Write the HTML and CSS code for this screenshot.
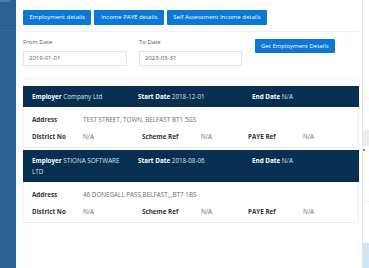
FILE: index.html
```html
<!DOCTYPE html>
<html>
<head>
<meta charset="utf-8">
<link rel="stylesheet" href="styles.css">
</head>
<body>
<div class="app">
  <aside class="sidebar"><div class="side-tab"></div><div class="side-line"></div></aside>
  <main class="main">
    <div class="tabs">
      <button class="btn">Employment details</button>
      <button class="btn">Income PAYE details</button>
      <button class="btn">Self Assessment Income details</button>
    </div>
    <hr class="divider">
    <div class="form-row">
      <div class="field from">
        <label class="field-label">From Date</label>
        <div class="input">2019-01-01</div>
      </div>
      <div class="field to">
        <label class="field-label">To Date</label>
        <div class="input">2023-03-31</div>
      </div>
      <div class="field action">
        <button class="btn btn-get">Get Employment Details</button>
      </div>
    </div>
    <hr class="divider divider-2">
    <section class="card">
      <div class="card-head">
        <div><b>Employer</b> Company Ltd</div>
        <div><b>Start Date</b> 2018-12-01</div>
        <div><b>End Date</b> N/A</div>
      </div>
      <div class="card-body">
        <div class="lbl">Address</div><div class="val wide">TEST STREET, TOWN, BELFAST BT1 5GS</div>
        <div class="lbl">District No</div><div class="val">N/A</div>
        <div class="lbl">Scheme Ref</div><div class="val">N/A</div>
        <div class="lbl">PAYE Ref</div><div class="val">N/A</div>
      </div>
    </section>
    <section class="card">
      <div class="card-head">
        <div><b>Employer</b> STIONA SOFTWARE LTD</div>
        <div><b>Start Date</b> 2018-08-06</div>
        <div><b>End Date</b> N/A</div>
      </div>
      <div class="card-body">
        <div class="lbl">Address</div><div class="val wide">46 DONEGALL PASS,BELFAST,,,BT7 1BS</div>
        <div class="lbl">District No</div><div class="val">N/A</div>
        <div class="lbl">Scheme Ref</div><div class="val">N/A</div>
        <div class="lbl">PAYE Ref</div><div class="val">N/A</div>
      </div>
    </section>
  </main>
  <aside class="panel">
    <div class="p-line l1"></div>
    <div class="p-box"></div>
    <div class="p-dot"></div>
    <div class="p-line l2"></div>
    <div class="p-blue"></div>
  </aside>
</div>
</body>
</html>
```

FILE: styles.css
```css
html, body {
  margin: 0;
  padding: 0;
  background: #fff;
}
body {
  width: 369px;
  height: 268px;
  overflow: hidden;
  font-family: "Open Sans", "Noto Sans", sans-serif;
  font-size: 6px;
  color: #555;
}
.app {
  display: flex;
  height: 268px;
}
.sidebar {
  width: 16px;
  flex: none;
  background: #2b6294;
  display: flex;
  flex-direction: column;
}
.side-tab {
  width: 10px;
  height: 2px;
  background: #4a7ba8;
}
.side-line {
  margin-top: 28px;
  height: 1px;
  background: #336a9b;
}
.main {
  width: 336px;
  flex: none;
  padding: 10px 3px 0 7px;
}
.tabs {
  display: flex;
  gap: 3px;
}
.btn {
  font-family: inherit;
  font-size: 6px;
  line-height: 9px;
  color: #fff;
  background: #0b78d5;
  border: 0;
  border-radius: 1px;
  padding: 3px 6.5px;
  margin: 0;
  white-space: nowrap;
}
.divider {
  border: 0;
  border-top: 1px solid #eef0f2;
  margin: 6px 0 0 0;
}
.form-row {
  display: flex;
  margin-top: 6px;
}
.field {
  display: flex;
  flex-direction: column;
}
.from { width: 104px; margin-right: 12px; }
.to { width: 103px; margin-right: 13px; }
.action { padding-top: 1px; }
.field-label {
  line-height: 9px;
  color: #5a5a5a;
  margin-bottom: 4px;
}
.input {
  height: 13px;
  line-height: 13px;
  border: 1px solid #e3e3e3;
  padding: 0 5px;
  color: #555;
}
.btn-get {
  padding: 2.5px 6px;
}
.divider-2 {
  margin-top: 12px;
}
.card {
  margin-top: 7px;
  font-size: 6.3px;
}
.card + .card {
  margin-top: 2px;
}
.card-head {
  background: #062f52;
  color: #d9e2ea;
  display: grid;
  grid-template-columns: 92px 100px 1fr;
  column-gap: 14px;
  padding: 5px 9px;
  line-height: 11px;
}
.card-head b {
  color: #fff;
  font-weight: 700;
}
.card-body {
  border: 1px solid #eceeef;
  border-top: 0;
  display: grid;
  grid-template-columns: 51px 59px 59px 47px 55px 1fr;
  row-gap: 6px;
  padding: 7px 8px 5px;
  line-height: 11px;
}
.lbl {
  font-weight: 700;
  color: #333;
}
.val {
  color: #6b6b6b;
}
.wide {
  grid-column: 2 / -1;
}
.panel {
  flex: 1;
  border-left: 1px solid #f6dede;
  display: flex;
  flex-direction: column;
}
.p-line {
  height: 1px;
  background: #f8e4e4;
}
.l1 { margin-top: 98px; }
.p-box {
  margin-top: 31px;
  height: 16px;
  background: #ececec;
}
.p-dot {
  margin-top: 3px;
  width: 2px;
  height: 2px;
  background: #888;
}
.l2 { margin-top: 50px; }
.p-blue {
  margin-top: 41px;
  flex: 1;
  background: #cfe6f5;
}
```
